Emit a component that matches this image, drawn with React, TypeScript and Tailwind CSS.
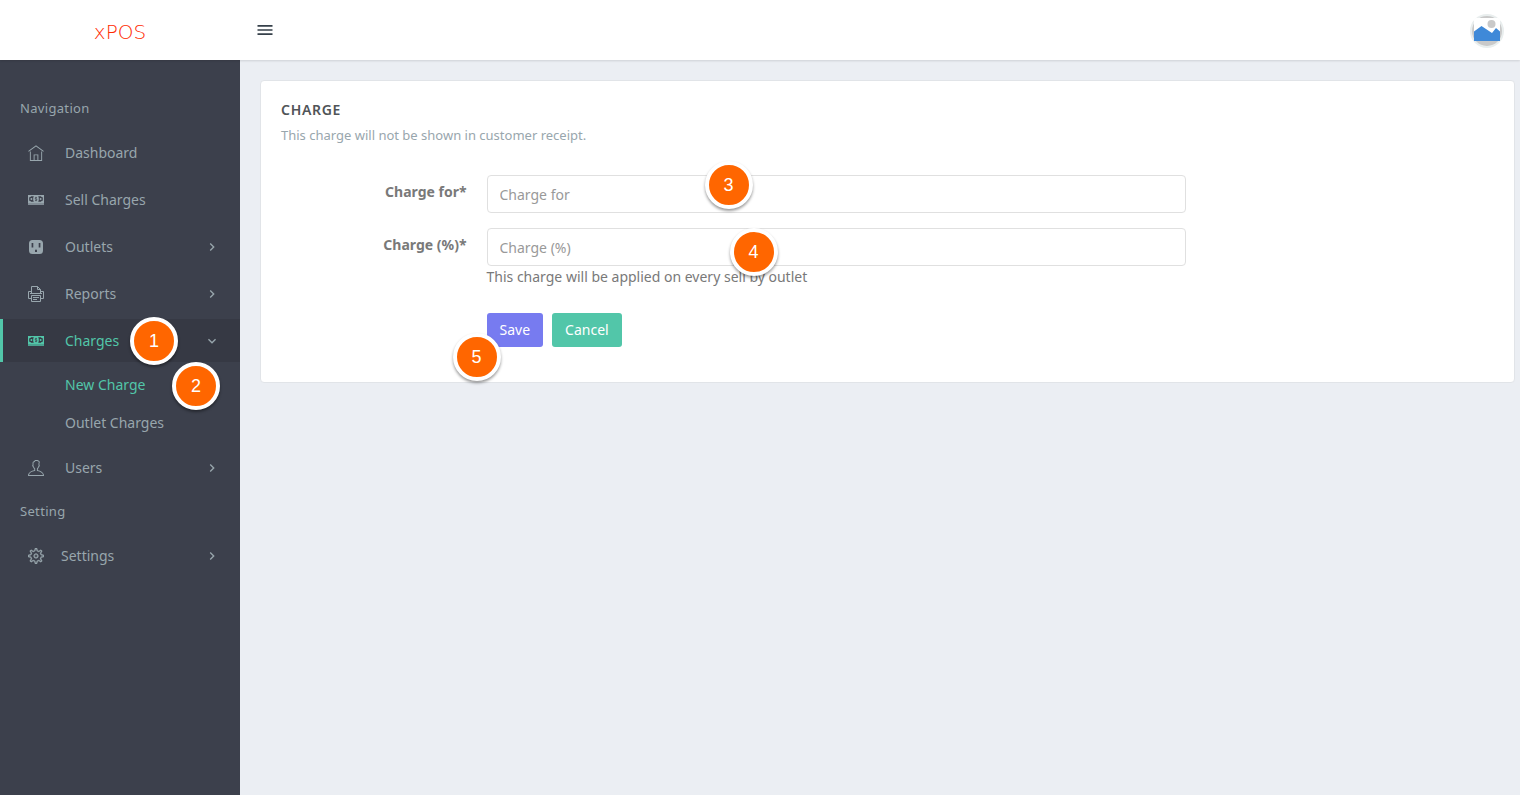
import type { ReactNode } from "react";
import { MdChevronRight, MdExpandMore, MdMenu } from "react-icons/md";
import { TfiHome, TfiSettings, TfiUser } from "react-icons/tfi";

function CashIcon() {
  return (
    <svg viewBox="0 0 16 16" className="size-4" fill="currentColor" aria-hidden="true">
      <path
        fillRule="evenodd"
        d="M0 3h16v8H0z M3 4.200 C2.800 5 2 5.200 1.200 5.300 V8.700 C2 8.800 2.800 9 3 9.800 H5.800 C4.900 8.300 4.900 5.700 5.800 4.200 Z M13 4.200 C13.200 5 14 5.200 14.800 5.300 V8.700 C14 8.800 13.200 9 13 9.800 H10.200 C11.100 8.300 11.100 5.700 10.200 4.200 Z M3.400 6 a1 1 0 1 1 0 2 a1 1 0 1 1 0 -2 M12.600 6 a1 1 0 1 1 0 2 a1 1 0 1 1 0 -2"
      />
      <path
        d="M9 5.800 C8.500 5.300 7.100 5.400 7.100 6.200 C7.100 7 9 6.900 9 7.800 C9 8.700 7.500 8.700 7 8.200 M8 4.800 V9.200"
        fill="none"
        stroke="#3c404c"
        strokeWidth="0.7"
      />
      <path d="M0 11h16v2H0z" opacity="0.75" />
    </svg>
  );
}

function OutletIcon() {
  return (
    <svg viewBox="0 0 16 16" className="size-4" fill="currentColor" aria-hidden="true">
      <path
        fillRule="evenodd"
        d="M4.500 1h7a3.500 3.500 0 0 1 3.500 3.500v7a3.500 3.500 0 0 1-3.500 3.500h-7A3.500 3.500 0 0 1 1 11.500v-7A3.500 3.500 0 0 1 4.500 1z M3.600 4v4.500h1.700V4z M10.700 4v4.500h1.700V4z M7 13v-1.500a1 1 0 0 1 2 0V13z"
      />
    </svg>
  );
}

function PrinterIcon() {
  return (
    <svg
      viewBox="0 0 16 16"
      className="size-4"
      fill="none"
      stroke="currentColor"
      strokeWidth="1"
      aria-hidden="true"
    >
      <path d="M3.500 7V0.500H9.500L12.500 3.500V7 M9.500 0.500V3.500H12.500" />
      <path d="M3 12.500H0.500V5.500H3.500 M12.500 5.500H15.500V12.500H13" />
      <path d="M2 7.500H14" />
      <path d="M3.500 9.500H12.500V15.500H3.500z M5 11.500H11 M5 13.500H9" />
    </svg>
  );
}

function Step({ n, className }: { n: number; className: string }) {
  return (
    <span
      className={`pointer-events-none absolute z-10 flex size-12 items-center justify-center rounded-full border-4 border-white bg-[#ff6600] font-['Liberation_Sans',sans-serif] text-lg leading-none text-white shadow-[0_2px_3px_rgba(0,0,0,0.4)] ${className}`}
    >
      {n}
    </span>
  );
}

type ItemProps = {
  icon: ReactNode;
  label: string;
  arrow?: "right" | "down";
  active?: boolean;
  tight?: boolean;
  children?: ReactNode;
};

function Item({ icon, label, arrow, active, tight, children }: ItemProps) {
  return (
    <a
      href="#"
      className={`relative my-[2px] flex h-[43px] items-center border-l-3 pr-5 pl-[25px] text-sm ${
        active
          ? "border-[#52c6a9] bg-[#363944] text-[#52c6a9]"
          : "border-transparent text-[#98a6ad]"
      }`}
    >
      <span className={tight ? "w-[33px]" : "w-[37px]"}>{icon}</span>
      <span className="flex-1">{label}</span>
      {arrow === "right" && <MdChevronRight className="size-4 text-[#98a6ad]" />}
      {arrow === "down" && <MdExpandMore className="size-4 text-[#98a6ad]" />}
      {children}
    </a>
  );
}

function MenuTitle({ children }: { children: ReactNode }) {
  return (
    <h2 className="flex h-[41px] items-center px-5 text-[13px] tracking-wide text-[#98a6ad]">
      {children}
    </h2>
  );
}

function Sidebar() {
  return (
    <nav className="flex w-60 shrink-0 flex-col bg-[#3c404c] pt-7">
      <MenuTitle>Navigation</MenuTitle>
      <Item icon={<TfiHome className="size-4" />} label="Dashboard" />
      <Item icon={<CashIcon />} label="Sell Charges" />
      <Item icon={<OutletIcon />} label="Outlets" arrow="right" />
      <Item icon={<PrinterIcon />} label="Reports" arrow="right" />
      <Item icon={<CashIcon />} label="Charges" arrow="down" active>
        <Step n={1} className="top-1/2 left-[127px] -translate-y-1/2" />
      </Item>
      <ul className="my-[2px] text-sm text-[#98a6ad]">
        <li className="relative">
          <a href="#" className="flex h-[38px] items-center pl-[65px] text-[#52c6a9]">
            New Charge
          </a>
          <Step n={2} className="-top-1 left-[172px]" />
        </li>
        <li>
          <a href="#" className="flex h-[38px] items-center pl-[65px]">
            Outlet Charges
          </a>
        </li>
      </ul>
      <Item icon={<TfiUser className="size-4" />} label="Users" arrow="right" />
      <MenuTitle>Setting</MenuTitle>
      <Item
        icon={<TfiSettings className="size-4 stroke-current [stroke-width:0.4]" />}
        label="Settings"
        arrow="right"
        tight
      />
    </nav>
  );
}

function Header() {
  return (
    <header className="relative z-20 flex h-[60px] items-center bg-white shadow-[0_1px_2px_rgba(0,0,0,0.12)]">
      <a
        href="#"
        className="flex w-60 shrink-0 justify-center pt-1 font-['DejaVu_Sans',sans-serif] text-xl font-extralight text-[#ff2a00]"
      >
        xPOS
      </a>
      <button type="button" aria-label="Toggle menu" className="ml-[15px] text-[#36404a]">
        <MdMenu className="size-5" />
      </button>
      <button type="button" aria-label="Account" className="mr-4 ml-auto">
        <svg viewBox="0 0 34 36" className="h-9 w-[34px]" aria-hidden="true">
          <circle cx="17" cy="19" r="16" fill="#c9c9c9" stroke="#e9eeee" strokeWidth="2" />
          <path d="M4 8.500 Q4 6 6.500 6 H27.500 Q30 6 30 8.500 V29 H4z" fill="#fff" />
          <circle cx="21.500" cy="12" r="4" fill="#c9c9c9" />
          <path d="M4 19.500 L11.500 14 L22 21 L26 16 L30 19.500 V29 H4z" fill="#3f89d8" />
        </svg>
      </button>
    </header>
  );
}

const inputClass =
  "block h-[38px] w-full rounded border border-[#e0e0e0] bg-white px-3 text-sm text-[#565656] outline-none placeholder:text-[#999999] placeholder:opacity-100";
const labelClass = "col-span-2 px-[10px] pt-[6px] text-right leading-[21px] font-bold";

function ChargeCard() {
  return (
    <section className="rounded border border-[#e1e4e8] bg-white p-5 pb-[35px] text-sm text-[#797979]">
      <h1 className="mb-1.5 leading-[18px] font-semibold tracking-wider text-[#505458] uppercase">
        Charge
      </h1>
      <p className="mb-[30px] text-[13px] leading-5 text-[#98a6ad]">
        This charge will not be shown in customer receipt.
      </p>
      <form className="-mx-[10px]">
        <div className="mb-[15px] grid grid-cols-12">
          <label htmlFor="charge-for" className={labelClass}>
            Charge for*
          </label>
          <div className="col-span-7 px-[10px]">
            <div className="relative">
              <input id="charge-for" type="text" placeholder="Charge for" className={inputClass} />
              <Step n={3} className="-top-3.5 left-[218px]" />
            </div>
          </div>
        </div>
        <div className="mb-[26px] grid grid-cols-12">
          <label htmlFor="charge-percent" className={labelClass}>
            Charge (%)*
          </label>
          <div className="col-span-7 px-[10px]">
            <div className="relative">
              <input id="charge-percent" type="text" placeholder="Charge (%)" className={inputClass} />
              <Step n={4} className="top-0 left-[243px]" />
            </div>
            <p className="leading-[21px]">This charge will be applied on every sell by outlet</p>
          </div>
        </div>
        <div className="grid grid-cols-12">
          <div className="relative col-span-7 col-start-3 flex gap-[9px] px-[10px]">
            <button type="submit" className="h-[34px] rounded-[3px] bg-[#777bf0] px-[13px] text-white">
              Save
            </button>
            <button type="button" className="h-[34px] rounded-[3px] bg-[#52c6a9] px-[13px] text-white">
              Cancel
            </button>
            <Step n={5} className="top-5 -left-6" />
          </div>
        </div>
      </form>
    </section>
  );
}

export default function App() {
  return (
    <div className="flex min-h-screen flex-col bg-[#ebeef3] font-['Noto_Sans',sans-serif]">
      <Header />
      <div className="flex flex-1">
        <Sidebar />
        <main className="min-w-0 flex-1 pt-5 pr-[5px] pl-5">
          <ChargeCard />
        </main>
      </div>
    </div>
  );
}
